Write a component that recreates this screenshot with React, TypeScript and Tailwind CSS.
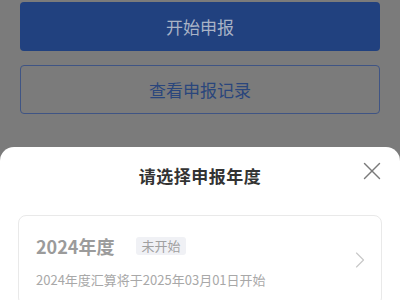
import { X, ChevronRight } from 'lucide-react';

const font = { fontFamily: '"Noto Sans CJK SC", "Noto Sans", sans-serif' };

export default function App() {
  return (
    <div
      className="w-[400px] h-[300px] overflow-hidden bg-[#7b7b7b] flex flex-col"
      style={font}
    >
      <div className="px-5 pt-[2px] flex flex-col gap-[14px]">
        <button className="h-[49px] w-full rounded-[4px] bg-[#21417f] text-[17px] text-[#a9b3c6]">
          开始申报
        </button>
        <button className="h-[49px] w-full rounded-[4px] border border-[#3f5484] text-[17px] text-[#2a467c]">
          查看申报记录
        </button>
      </div>

      <div className="mt-[33px] flex-1 rounded-t-[14px] bg-white">
        <div className="relative h-[58px] flex items-center justify-center">
          <h2 className="text-[17px] font-bold text-[#333] tracking-[0.5px]">请选择申报年度</h2>
          <X
            className="absolute right-[13px] top-[9px] text-[#7a7a7a]"
            size={30}
            strokeWidth={1.1}
          />
        </div>
        <div className="mx-[18px] mt-[10px] rounded-lg border border-[#e9e9e9] pl-[17px] pr-[7px] pt-[17px] pb-4 flex items-center">
          <div className="flex-1 flex flex-col gap-[12px]">
            <div className="flex items-center gap-[22px]">
              <span className="text-[18px] font-bold leading-[26px] text-[#9b9b9b]">2024年度</span>
              <span className="rounded-[3px] bg-[#f0f1f5] px-[5px] h-[18px] leading-[18px] text-[13px] text-[#a0a0a0]">
                未开始
              </span>
            </div>
            <span className="text-[13px] leading-[18px] text-[#a8a8a8]">
              2024年度汇算将于2025年03月01日开始
            </span>
          </div>
          <ChevronRight className="mt-[-3px] text-[#c8c8c8]" size={28} strokeWidth={1} />
        </div>
      </div>
    </div>
  );
}
